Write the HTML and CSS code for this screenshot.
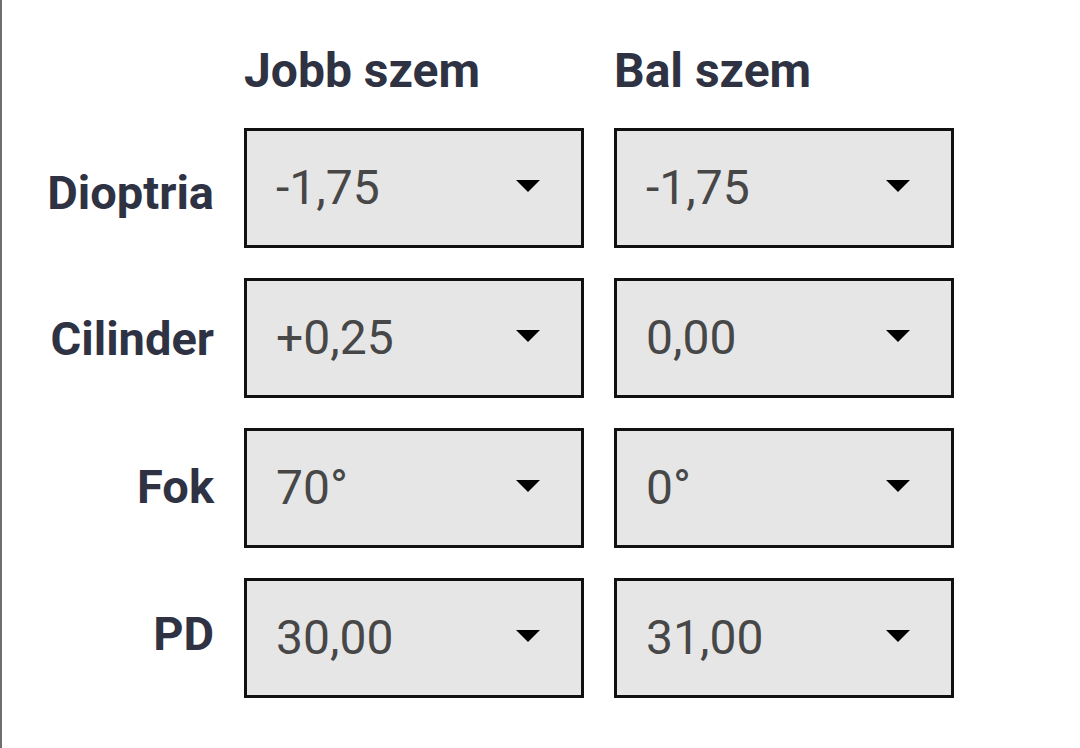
FILE: index.html
```html
<!DOCTYPE html>
<html lang="hu">
<head>
<meta charset="utf-8">
<title>Dioptria</title>
<link rel="stylesheet" href="styles.css">
</head>
<body>
<div class="panel">
  <div class="grid">
    <div class="corner"></div>
    <div class="head">Jobb szem</div>
    <div class="head">Bal szem</div>

    <div class="label label-low">Dioptria</div>
    <div class="select"><span class="val">-1,75</span><svg class="arrow" viewBox="0 0 24 12"><path d="M0 0h24L12 12z"/></svg></div>
    <div class="select"><span class="val">-1,75</span><svg class="arrow" viewBox="0 0 24 12"><path d="M0 0h24L12 12z"/></svg></div>

    <div class="label">Cilinder</div>
    <div class="select"><span class="val">+0,25</span><svg class="arrow" viewBox="0 0 24 12"><path d="M0 0h24L12 12z"/></svg></div>
    <div class="select"><span class="val">0,00</span><svg class="arrow" viewBox="0 0 24 12"><path d="M0 0h24L12 12z"/></svg></div>

    <div class="label label-up">Fok</div>
    <div class="select"><span class="val">70°</span><svg class="arrow" viewBox="0 0 24 12"><path d="M0 0h24L12 12z"/></svg></div>
    <div class="select"><span class="val">0°</span><svg class="arrow" viewBox="0 0 24 12"><path d="M0 0h24L12 12z"/></svg></div>

    <div class="label label-high">PD</div>
    <div class="select"><span class="val">30,00</span><svg class="arrow" viewBox="0 0 24 12"><path d="M0 0h24L12 12z"/></svg></div>
    <div class="select"><span class="val">31,00</span><svg class="arrow" viewBox="0 0 24 12"><path d="M0 0h24L12 12z"/></svg></div>
  </div>
</div>
</body>
</html>
```

FILE: styles.css
```css
html, body {
  margin: 0;
  padding: 0;
  background: #ffffff;
}

.panel {
  box-sizing: border-box;
  height: 748px;
  border-left: 2px solid #6e6e6e;
  padding-top: 44px;
  font-family: Roboto, "Liberation Sans", sans-serif;
}

.grid {
  display: grid;
  grid-template-columns: 212px 340px 340px;
  grid-template-rows: 54px repeat(4, 120px);
  column-gap: 30px;
  row-gap: 30px;
}

.head {
  font-size: 48px;
  font-weight: 700;
  line-height: 54px;
  color: #2e3242;
  white-space: nowrap;
}

.label {
  font-size: 47px;
  font-weight: 700;
  line-height: 1;
  color: #2e3242;
  display: flex;
  align-items: center;
  justify-content: flex-end;
  white-space: nowrap;
}

.label-low {
  padding-top: 8px;
}

.label-up {
  padding-bottom: 4px;
}

.label-high {
  padding-bottom: 10px;
}

.select {
  box-sizing: border-box;
  border: 3px solid #111111;
  background: #e6e6e6;
  display: flex;
  align-items: center;
  justify-content: space-between;
  padding: 0 41px 0 29px;
}

.val {
  font-size: 48px;
  font-weight: 400;
  color: #474747;
  line-height: 1;
}

.arrow {
  width: 24px;
  height: 12px;
  fill: #000000;
  margin-top: -4px;
}
```
